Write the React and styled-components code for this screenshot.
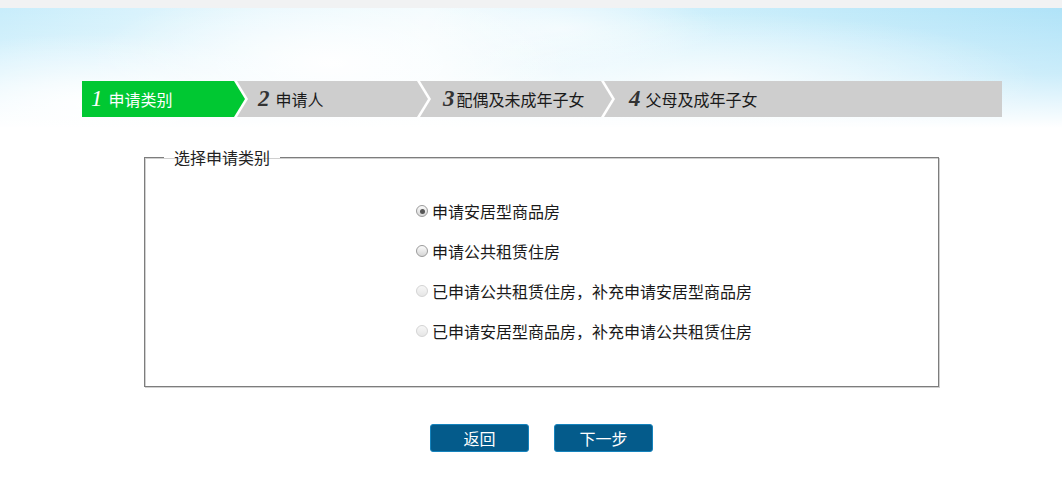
import React from "react";
import styled, { createGlobalStyle } from "styled-components";

const Global = createGlobalStyle`
  html, body { margin: 0; padding: 0; background: #fff; }
  body { font-family: "Noto Sans CJK SC", "Noto Sans", sans-serif; color: #222; }
`;

const TopStrip = styled.div`
  height: 8px;
  background: #f1f2f3;
`;

const Sky = styled.header`
  height: 120px;
  padding-top: 73px;
  box-sizing: border-box;
  background:
    radial-gradient(ellipse 240px 80px at 330px 55px, rgba(255,255,255,0.95), rgba(255,255,255,0)),
    radial-gradient(ellipse 220px 70px at 90px 95px, rgba(255,255,255,0.95), rgba(255,255,255,0)),
    radial-gradient(ellipse 320px 70px at 720px 75px, rgba(255,255,255,0.75), rgba(255,255,255,0)),
    radial-gradient(ellipse 160px 40px at 560px 20px, rgba(255,255,255,0.6), rgba(255,255,255,0)),
    linear-gradient(to bottom, rgba(255,255,255,0) 0%, rgba(255,255,255,0.35) 55%, #fff 100%),
    linear-gradient(to right, #c8edfb 0%, #e6f7fd 25%, #f2fbfe 40%, #cdeffb 65%, #b0e3f8 100%);
`;

const StepBar = styled.nav`
  display: flex;
  width: 920px;
  height: 36px;
  margin-left: 82px;
  background: #cecece;
  border-radius: 0 2px 2px 0;
`;

const StepShell = styled.div`
  position: relative;
  z-index: ${(p) => p.$z};
  width: ${(p) => (p.$last ? "auto" : `${p.$w}px`)};
  flex: ${(p) => (p.$last ? "1" : "0 0 auto")};
  margin-left: ${(p) => (p.$first ? "0" : "-11px")};
  height: 36px;
  background: ${(p) => (p.$last ? "transparent" : "#fff")};
  clip-path: ${(p) =>
    p.$last
      ? "none"
      : "polygon(0 0, calc(100% - 11px) 0, 100% 50%, calc(100% - 11px) 100%, 0 100%)"};
`;

const StepFace = styled.div`
  display: flex;
  align-items: center;
  height: 100%;
  box-sizing: border-box;
  padding-left: ${(p) => p.$pad}px;
  background: ${(p) => (p.$active ? "#00c832" : "#cecece")};
  color: ${(p) => (p.$active ? "#fff" : "#1a1a1a")};
  font-size: 16px;
  line-height: 20px;
  white-space: nowrap;
  clip-path: ${(p) =>
    p.$last
      ? "none"
      : "polygon(0 0, calc(100% - 14px) 0, calc(100% - 3px) 50%, calc(100% - 14px) 100%, 0 100%)"};
`;

const StepNum = styled.span`
  font-family: "Liberation Serif", "DejaVu Serif", serif;
  font-style: italic;
  font-size: 23px;
  line-height: 24px;
  margin-right: ${(p) => p.$gap}px;
  color: ${(p) => (p.$active ? "#fff" : "#333")};
  font-weight: ${(p) => (p.$active ? 400 : 700)};
`;

const Main = styled.main`
  width: 795px;
  margin-left: 144px;
`;

const Box = styled.fieldset`
  margin: 19px 0 0;
  padding: 0;
  border: 1px solid #7d7d7d;
  box-shadow: inset 1px 1px 0 #d0d0d0, 1px 1px 0 #d0d0d0;
  min-width: 0;
`;

const Legend = styled.legend`
  margin: 0 0 0 19px;
  padding: 0 10px;
  font-size: 16px;
  line-height: 20px;
  color: #222;
`;

const OptionList = styled.div`
  display: flex;
  flex-direction: column;
  padding: 24px 0 35px 271px;
`;

const Option = styled.label`
  display: flex;
  align-items: center;
  height: 40px;
  font-size: 16px;
  color: #1a1a1a;
  cursor: ${(p) => (p.$disabled ? "default" : "pointer")};
`;

const RadioDot = styled.span`
  position: relative;
  box-sizing: border-box;
  width: 12px;
  height: 12px;
  margin-right: 4px;
  border-radius: 50%;
  border: 1px solid ${(p) => (p.$disabled ? "#d4d4d4" : "#9a9a9a")};
  background: ${(p) =>
    p.$disabled
      ? "linear-gradient(#f7f7f7, #e6e6e6)"
      : "linear-gradient(#fbfbfb, #d6d6d6)"};
  &::after {
    content: "";
    display: ${(p) => (p.$checked ? "block" : "none")};
    position: absolute;
    left: 2.5px;
    top: 2.5px;
    width: 5px;
    height: 5px;
    border-radius: 50%;
    background: #555;
  }
`;

const Actions = styled.div`
  display: flex;
  justify-content: center;
  gap: 25px;
  margin-top: 37px;
`;

const Button = styled.button`
  width: 99px;
  height: 28px;
  border: 1px solid #1583bd;
  border-radius: 3px;
  background: #045b8b;
  color: #fff;
  font-family: "Noto Sans CJK SC", sans-serif;
  font-size: 16px;
  line-height: 20px;
  padding: 0;
  cursor: pointer;
`;

const steps = [
  { n: "1", label: "申请类别", w: 166, pad: 9, gap: 6 },
  { n: "2", label: "申请人", w: 194, pad: 21, gap: 6 },
  { n: "3", label: "配偶及未成年子女", w: 195, pad: 23, gap: 2 },
  { n: "4", label: "父母及成年子女", w: 0, pad: 25, gap: 5 },
];

const options = [
  { text: "申请安居型商品房", checked: true },
  { text: "申请公共租赁住房" },
  { text: "已申请公共租赁住房，补充申请安居型商品房", disabled: true },
  { text: "已申请安居型商品房，补充申请公共租赁住房", disabled: true },
];

export default function App() {
  return (
    <>
      <Global />
      <TopStrip />
      <Sky>
        <StepBar>
          {steps.map((s, i) => {
            const last = i === steps.length - 1;
            return (
              <StepShell key={s.n} $w={s.w} $z={10 - i} $first={i === 0} $last={last}>
                <StepFace $active={i === 0} $pad={s.pad} $last={last}>
                  <StepNum $active={i === 0} $gap={s.gap}>{s.n}</StepNum>
                  {s.label}
                </StepFace>
              </StepShell>
            );
          })}
        </StepBar>
      </Sky>
      <Main>
        <Box>
          <Legend>选择申请类别</Legend>
          <OptionList>
            {options.map((o) => (
              <Option key={o.text} $disabled={o.disabled}>
                <RadioDot $checked={o.checked} $disabled={o.disabled} />
                {o.text}
              </Option>
            ))}
          </OptionList>
        </Box>
        <Actions>
          <Button>返回</Button>
          <Button>下一步</Button>
        </Actions>
      </Main>
    </>
  );
}
